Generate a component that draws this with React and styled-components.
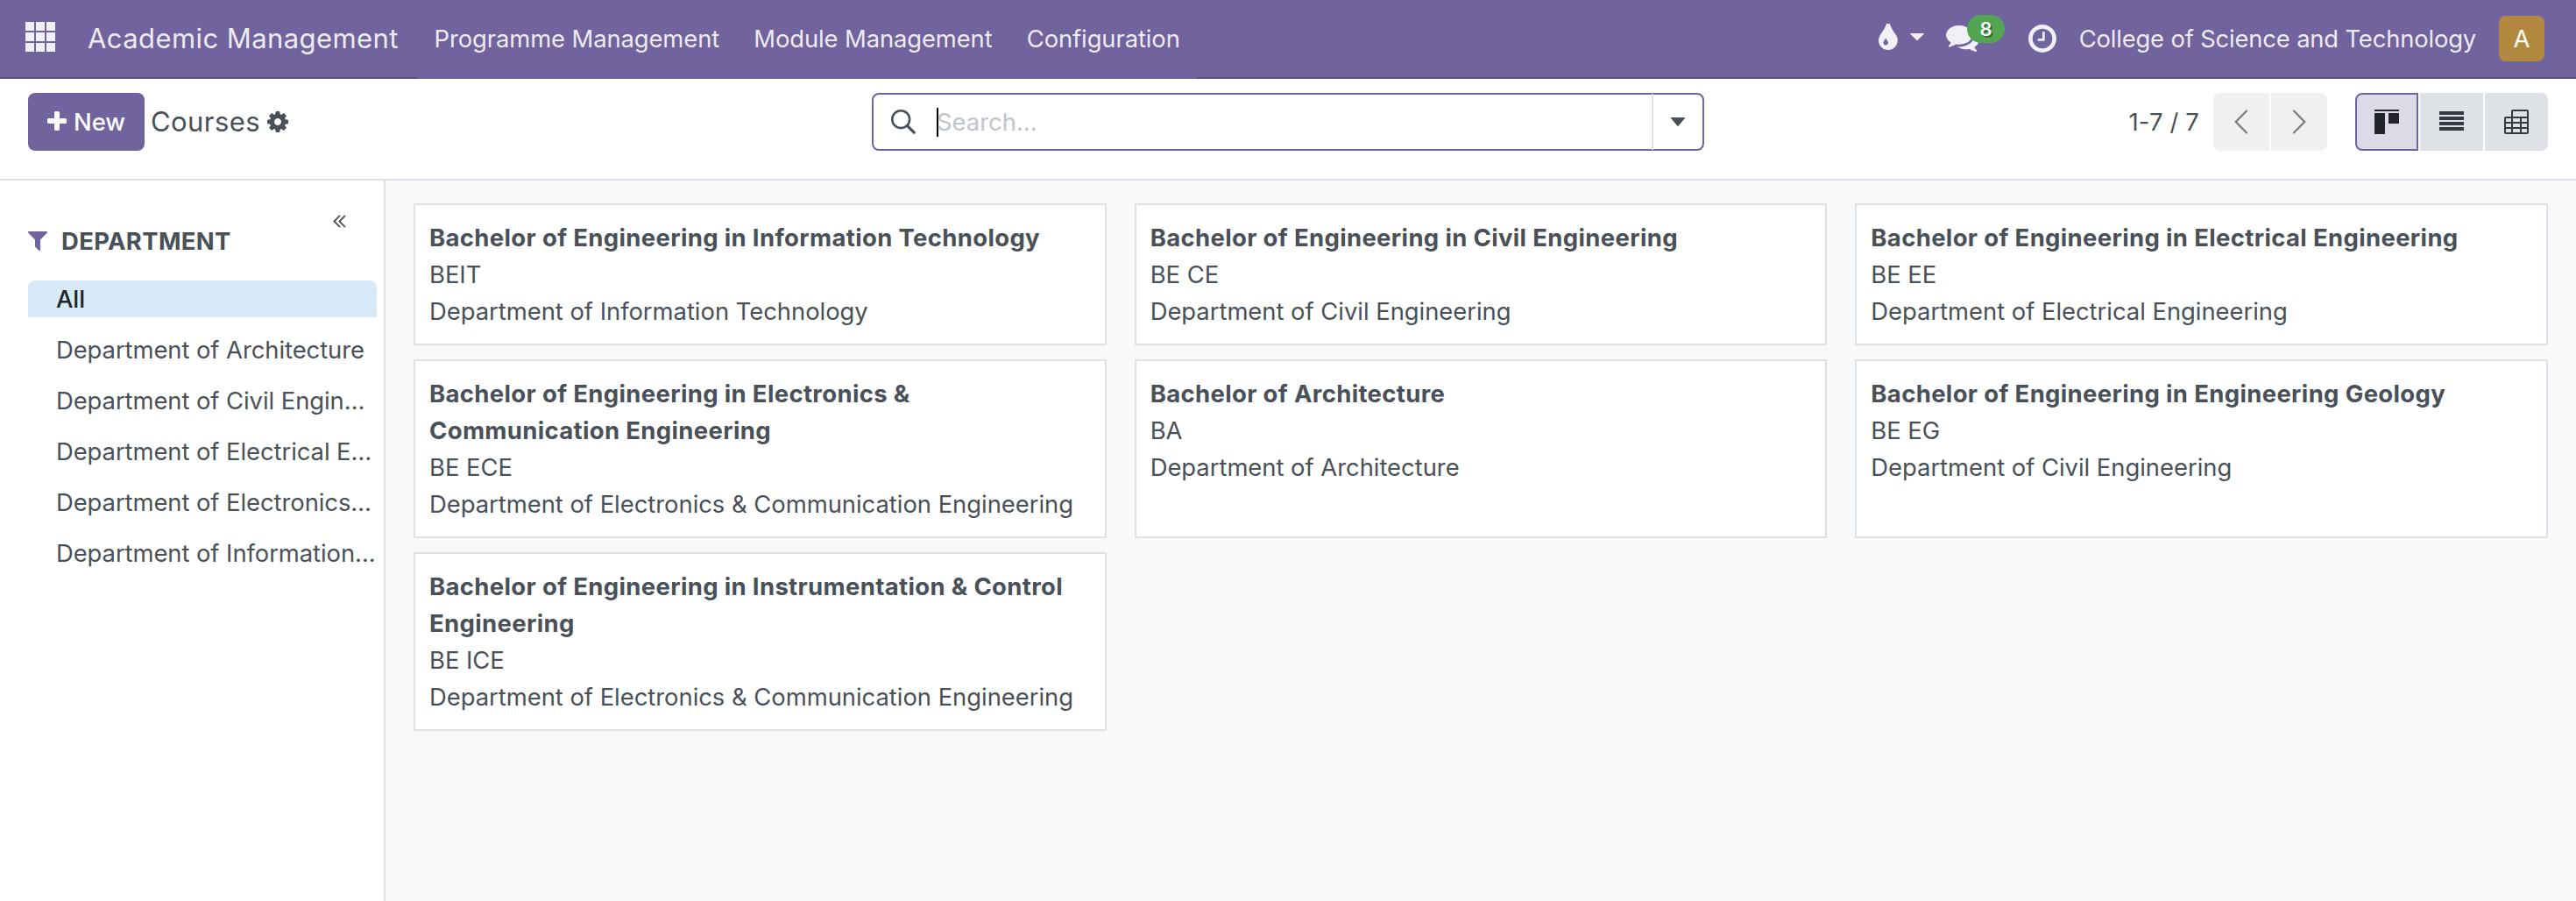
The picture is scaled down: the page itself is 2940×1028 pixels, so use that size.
import React from "react";
import styled, { createGlobalStyle } from "styled-components";

const BRAND = "#71639e";
const TEXT = "#495057";
const LINE = "#dee2e6";

const GlobalStyle = createGlobalStyle`
  * { box-sizing: border-box; }
  html, body { margin: 0; padding: 0; }
  body {
    font-family: Inter, "Liberation Sans", sans-serif;
    font-size: 27.4px;
    line-height: 42px;
    color: ${TEXT};
    background: #fff;
  }
`;

const Page = styled.div`
  display: flex;
  flex-direction: column;
  height: 1028px;
  overflow: hidden;
`;

/* ---------- Navbar ---------- */

const Navbar = styled.header`
  display: flex;
  align-items: center;
  flex: 0 0 90px;
  padding: 0 36px 0 29px;
  background: ${BRAND};
  box-shadow: inset 0 -2px 0 #5a4f7f;
  color: rgba(255, 255, 255, 0.9);
`;

const Brand = styled.a`
  width: 376px;
  margin: 0 0 2px 37px;
  font-size: 31px;
  letter-spacing: 0.42px;
  white-space: nowrap;
`;

const Menu = styled.nav`
  display: flex;
  align-items: center;
  height: 90px;
  padding-bottom: 2px;
  background: ${BRAND};
`;

const MenuItem = styled.a`
  padding: 0 19.6px;
  letter-spacing: -0.1px;
  white-space: nowrap;
`;

const Systray = styled.div`
  display: flex;
  align-items: center;
  height: 88px;
  margin: 0 0 2px auto;
`;

const Debug = styled.span`
  display: flex;
  align-items: center;
  gap: 14.5px;
  margin-right: 25px;
  padding-bottom: 4px;
`;

const Messages = styled.span`
  position: relative;
  display: flex;
  margin-right: 56px;
`;

const Badge = styled.span`
  position: absolute;
  left: 24px;
  top: -12px;
  width: 43px;
  height: 32px;
  border-radius: 16px;
  background: #52a652;
  color: #f4f3f7;
  font-size: 22px;
  font-weight: 600;
  line-height: 32px;
  text-align: center;
  text-shadow: 2px 2px 0 rgba(0, 0, 0, 0.35);
`;

const Company = styled.span`
  margin: 0 26px 0 25.5px;
  letter-spacing: -0.17px;
  white-space: nowrap;
`;

const Avatar = styled.span`
  width: 52px;
  height: 52px;
  border-radius: 8px;
  background: #b3893f;
  color: #fff;
  line-height: 52px;
  text-align: center;
`;

/* ---------- Control panel ---------- */

const ControlPanel = styled.section`
  display: grid;
  grid-template-columns: 963px 950px 1fr;
  flex: 0 0 116px;
  padding: 16px 32px 0;
  border-bottom: 2px solid ${LINE};
  background: #fff;
`;

const Crumbs = styled.div`
  display: flex;
  align-items: center;
  height: 66px;
`;

const NewButton = styled.button`
  display: flex;
  align-items: center;
  gap: 8px;
  width: 133px;
  height: 66px;
  padding: 0 0 0 22px;
  border: 0;
  border-radius: 8px;
  background: ${BRAND};
  color: #fff;
  font: 500 27.4px/42px Inter, sans-serif;

  svg { margin-bottom: 2px; }
`;

const Title = styled.h1`
  margin: 0 8px 0 7px;
  font-size: 31px;
  font-weight: 400;
  line-height: 42px;
  letter-spacing: 0.43px;
`;

const SearchBox = styled.div`
  display: flex;
  align-items: center;
  height: 66px;
  border: 2px solid ${BRAND};
  border-radius: 8px;
  background: #fff;
`;

const SearchIcon = styled.span`
  display: flex;
  width: 72px;
  padding-left: 20px;
`;

const SearchInput = styled.span`
  flex: 1;
  height: 33px;
  border-left: 2px solid #000;
  color: #c0c5cb;
  line-height: 33px;
  text-indent: -2px;
`;

const SearchToggle = styled.span`
  display: flex;
  align-items: center;
  justify-content: center;
  width: 58px;
  height: 64px;
  margin: -1px 0;
  padding-right: 1px;
  border-left: 2px solid ${LINE};
`;

const Tools = styled.div`
  display: flex;
  justify-content: flex-end;
  align-items: center;
  height: 66px;
`;

const PagerText = styled.span`
  margin-right: 16px;
  letter-spacing: 0.15px;
`;

const ButtonGroup = styled.div`
  display: flex;
  gap: 2px;
  height: 66px;
  margin-left: ${(p) => p.$offset || 0}px;
`;

const GroupButton = styled.button`
  display: flex;
  align-items: center;
  justify-content: center;
  width: ${(p) => p.$width}px;
  padding: 0;
  border: ${(p) => (p.$active ? `2px solid ${BRAND}` : "0")};
  background: ${(p) => (p.$active ? "#dddae7" : p.$muted ? "#eff0f2" : LINE)};

  &:first-child { border-radius: 8px 0 0 8px; }
  &:last-child { border-radius: 0 8px 8px 0; }
`;

/* ---------- Body ---------- */

const Body = styled.main`
  display: flex;
  flex: 1;
  min-height: 0;
`;

const Sidebar = styled.aside`
  flex: 0 0 440px;
  width: 440px;
  min-width: 0;
  padding: 39px 8px 0 32px;
  border-right: 2px solid ${LINE};
  background: #fff;
`;

const Collapse = styled.div`
  display: flex;
  justify-content: flex-end;
  height: 15px;
  padding-right: 35px;
`;

const SectionHeader = styled.div`
  display: flex;
  align-items: center;
  gap: 16px;
  height: 42px;
  margin: -6px 0 24px;
  font-weight: 700;
  letter-spacing: 0.38px;
`;

const DepartmentList = styled.ul`
  display: flex;
  flex-direction: column;
  gap: 16px;
  margin: 0;
  padding: 0;
  list-style: none;
`;

const Department = styled.li`
  overflow: hidden;
  height: 42px;
  padding-left: 32px;
  border-radius: 8px 8px 0 0;
  background: ${(p) => (p.$active ? "#d8e9f7" : "transparent")};
  color: ${(p) => (p.$active ? "#212529" : TEXT)};
  font-weight: ${(p) => (p.$active ? 500 : 400)};
  letter-spacing: -0.06px;
  text-overflow: ellipsis;
  white-space: nowrap;
`;

const Kanban = styled.section`
  display: grid;
  grid-template-columns: repeat(3, minmax(0, 1fr));
  align-content: start;
  gap: 16px 32px;
  flex: 1;
  min-width: 0;
  padding: 26px 32px;
  background: #f8f9fb;
`;

const Card = styled.article`
  padding: 16px;
  border: 2px solid ${LINE};
  background: #fff;
`;

const CardTitle = styled.strong`
  display: block;
  font-size: 27.5px;
  font-weight: 700;
  letter-spacing: 0.34px;
`;

const CardLine = styled.div`
  letter-spacing: -0.02px;
  white-space: nowrap;
`;

/* ---------- Icons ---------- */

const Glyph = ({ box, w, h, d, color = "currentColor" }) => (
  <svg width={w} height={h} viewBox={box} fill={color}>
    <path d={d} />
  </svg>
);

const AppsGrid = styled.svg`
  margin-bottom: 6px;
`;

const AppsIcon = () => (
  <AppsGrid width="34" height="34" viewBox="0 0 34 34" fill="currentColor">
    {[0, 12, 24].map((y) =>
      [0, 12, 24].map((x) => <rect key={`${x}-${y}`} x={x} y={y} width="10" height="10" />)
    )}
  </AppsGrid>
);

const TintIcon = () => (
  <Glyph
    box="384 128 1024 1408"
    w={21.8}
    h={30}
    d="M896 1152q0-36-20-69-1-1-15.5-22.5t-25.5-38-25-44-21-50.5q-4-16-21-16t-21 16q-7 23-21 50.5t-25 44-25.5 38-15.5 22.5q-20 33-20 69 0 53 37.5 90.5t90.5 37.5 90.5-37.5 37.5-90.5zm512-128q0 212-150 362t-362 150-362-150-150-362q0-145 81-275 6-9 62.5-90.5t101-151 99.5-178 83-201.5q9-30 34-47t51-17 51.5 17 33.5 47q28 93 83 201.5t99.5 178 101 151 62.5 90.5q81 127 81 275z"
  />
);

const CommentsIcon = () => (
  <Glyph
    box="0 256 1792 1408"
    w={38}
    h={30}
    d="M1408 768q0 139-94 257t-256.5 186.5-353.5 68.5q-86 0-176-16-124 88-278 128-36 9-86 16h-3q-11 0-20.5-8t-11.5-21q-1-3-1-6.5t.5-6.5 2-6l2.5-5 3.5-5.5 4-5 4.5-5 4-4.5q5-6 23-25t26-29.5 22.5-29 25-38.5 20.5-44q-124-72-195-177t-71-224q0-139 94-257t256.5-186.5 353.5-68.5 353.5 68.5 256.5 186.5 94 257zm384 256q0 120-71 224.5t-195 176.5q10 24 20.5 44t25 38.5 22.5 29 26 29.5 23 25q1 1 4 4.5t4.5 5 4 5 3.5 5.5l2.5 5 2 6 .5 6.5-1 6.5q-3 14-13 22t-22 7q-50-7-86-16-154-40-278-128-90 16-176 16-271 0-472-132 58 4 88 4 161 0 309-45t264-129q125-92 192-212t67-254q0-77-23-152 129 71 204 178t75 230z"
  />
);

const ClockIcon = () => (
  <Glyph
    box="128 128 1536 1536"
    w={32}
    h={32}
    d="M1024 544v448q0 14-9 23t-23 9h-320q-14 0-23-9t-9-23v-64q0-14 9-23t23-9h224v-352q0-14 9-23t23-9h64q14 0 23 9t9 23zm416 352q0-148-73-273t-198-198-273-73-273 73-198 198-73 273 73 273 198 198 273 73 273-73 198-198 73-273zm224 0q0 209-103 385.5t-279.5 279.5-385.5 103-385.5-103-279.5-279.5-103-385.5 103-385.5 279.5-279.5 385.5-103 385.5 103 279.5 279.5 103 385.5z"
  />
);

const PlusIcon = () => (
  <Glyph
    box="192 128 1408 1408"
    w={22}
    h={22}
    d="M1600 736v192q0 40-28 68t-68 28h-416v416q0 40-28 68t-68 28h-192q-40 0-68-28t-28-68v-416h-416q-40 0-68-28t-28-68v-192q0-40 28-68t68-28h416v-416q0-40 28-68t68-28h192q40 0 68 28t28 68v416h416q40 0 68 28t28 68z"
  />
);

const CogIcon = () => (
  <Glyph
    box="128 128 1536 1536"
    w={24}
    h={24}
    d="M1152 896q0-106-75-181t-181-75-181 75-75 181 75 181 181 75 181-75 75-181zm512-109v222q0 12-8 23t-20 13l-185 28q-19 54-39 91 35 50 107 138 10 12 10 25t-9 23q-27 37-99 108t-94 71q-12 0-26-9l-138-108q-44 23-91 38-16 136-29 186-7 28-36 28h-222q-14 0-24.5-8.5t-11.5-21.5l-28-184q-49-16-90-37l-141 107q-10 9-25 9-14 0-25-11-126-114-165-168-7-10-7-23 0-12 8-23 15-21 51-66.5t54-70.5q-27-50-41-99l-183-27q-13-2-21-12.5t-8-23.5v-222q0-12 8-23t19-13l186-28q14-46 39-92-40-57-107-138-10-12-10-24 0-10 9-23 26-36 98.5-107.5t94.5-71.5q13 0 26 10l138 107q44-23 91-38 16-136 29-186 7-28 36-28h222q14 0 24.5 8.5t11.5 21.5l28 184q49 16 90 37l142-107q9-9 24-9 13 0 25 10 129 119 165 170 7 8 7 22 0 12-8 23-15 21-51 66.5t-54 70.5q26 50 41 98l183 28q13 2 21 12.5t8 23.5z"
  />
);

const FilterIcon = () => (
  <Glyph
    box="192 256 1408 1408"
    w={22}
    h={22}
    color={BRAND}
    d="M1595 295q17 41-14 70l-493 493v742q0 42-39 59-13 5-25 5-27 0-45-19l-256-256q-19-19-19-45v-486l-493-493q-31-29-14-70 17-39 59-39h1280q42 0 59 39z"
  />
);

const CaretIcon = ({ w, h }) => (
  <svg width={w} height={h} viewBox="0 0 16 9" preserveAspectRatio="none" fill="currentColor">
    <path d="M0.6 0h14.8q.9.4.3 1.2L8.7 8.6q-.7.6-1.4 0L.3 1.2Q-.3.4.6 0z" />
  </svg>
);

const SearchGlyph = () => (
  <svg width="28" height="28" viewBox="0 0 28 28" fill="none" stroke={TEXT}>
    <circle cx="11.2" cy="11.2" r="9.9" strokeWidth="2.6" />
    <path d="M18.4 18.4l7.8 7.8" strokeWidth="3.2" strokeLinecap="round" />
  </svg>
);

const ChevronIcon = ({ points }) => (
  <svg width="16" height="28" viewBox="0 0 16 28" fill="none" stroke="#7e8082" strokeWidth="2.4" strokeLinecap="round">
    <polyline points={points} />
  </svg>
);

const DoubleAngleIcon = () => (
  <svg width="15" height="15" viewBox="0 0 15 15" fill="none" stroke={TEXT} strokeWidth="1.8">
    <path d="M8 .9L1.4 7.5 8 14.1M14 .9L7.4 7.5 14 14.1" />
  </svg>
);

const KanbanIcon = () => (
  <svg width="28" height="28" viewBox="0 0 28 28" fill="#212529">
    <rect width="28" height="2" />
    <rect y="4" width="12" height="24" />
    <rect x="16" y="4" width="12" height="12" />
  </svg>
);

const ListIcon = () => (
  <svg width="28" height="28" viewBox="0 0 28 28" fill="#343a40">
    {[2, 8, 14, 20].map((y) => (
      <rect key={y} y={y} width="28" height="4" />
    ))}
  </svg>
);

const PivotIcon = () => (
  <svg width="28" height="28" viewBox="0 0 28 28" fill="none" stroke="#343a40" strokeWidth="2">
    <path d="M9 27V2q0-1 1-1h16q1 0 1 1v24q0 1-1 1H2q-1 0-1-1V10q0-1 1-1h25M1 15h26M1 21h26M19 9v18" />
  </svg>
);

/* ---------- Data ---------- */

const MENU = ["Programme Management", "Module Management", "Configuration"];

const DEPARTMENTS = [
  "All",
  "Department of Architecture",
  "Department of Civil Engineering",
  "Department of Electrical Engineering",
  "Department of Electronics & Communication Engineering",
  "Department of Information Technology",
];

const COURSES = [
  ["Bachelor of Engineering in Information Technology", "BEIT", "Department of Information Technology"],
  ["Bachelor of Engineering in Civil Engineering", "BE CE", "Department of Civil Engineering"],
  ["Bachelor of Engineering in Electrical Engineering", "BE EE", "Department of Electrical Engineering"],
  ["Bachelor of Engineering in Electronics & Communication Engineering", "BE ECE", "Department of Electronics & Communication Engineering"],
  ["Bachelor of Architecture", "BA", "Department of Architecture"],
  ["Bachelor of Engineering in Engineering Geology", "BE EG", "Department of Civil Engineering"],
  ["Bachelor of Engineering in Instrumentation & Control Engineering", "BE ICE", "Department of Electronics & Communication Engineering"],
];

export default function App() {
  return (
    <Page>
      <GlobalStyle />
      <Navbar>
        <AppsIcon />
        <Brand>Academic Management</Brand>
        <Menu>
          {MENU.map((label) => (
            <MenuItem key={label}>{label}</MenuItem>
          ))}
        </Menu>
        <Systray>
          <Debug>
            <TintIcon />
            <CaretIcon w={16} h={8} />
          </Debug>
          <Messages>
            <CommentsIcon />
            <Badge>8</Badge>
          </Messages>
          <ClockIcon />
          <Company>College of Science and Technology</Company>
          <Avatar>A</Avatar>
        </Systray>
      </Navbar>

      <ControlPanel>
        <Crumbs>
          <NewButton>
            <PlusIcon />
            New
          </NewButton>
          <Title>Courses</Title>
          <CogIcon />
        </Crumbs>
        <SearchBox>
          <SearchIcon>
            <SearchGlyph />
          </SearchIcon>
          <SearchInput>Search...</SearchInput>
          <SearchToggle>
            <CaretIcon w={16} h={10} />
          </SearchToggle>
        </SearchBox>
        <Tools>
          <PagerText>1-7 / 7</PagerText>
          <ButtonGroup>
            <GroupButton $width={64} $muted>
              <ChevronIcon points="14,1.5 1.8,14 14,26.5" />
            </GroupButton>
            <GroupButton $width={64} $muted>
              <ChevronIcon points="2,1.5 14.2,14 2,26.5" />
            </GroupButton>
          </ButtonGroup>
          <ButtonGroup $offset={32}>
            <GroupButton $width={72} $active>
              <KanbanIcon />
            </GroupButton>
            <GroupButton $width={72}>
              <ListIcon />
            </GroupButton>
            <GroupButton $width={72}>
              <PivotIcon />
            </GroupButton>
          </ButtonGroup>
        </Tools>
      </ControlPanel>

      <Body>
        <Sidebar>
          <Collapse>
            <DoubleAngleIcon />
          </Collapse>
          <SectionHeader>
            <FilterIcon />
            DEPARTMENT
          </SectionHeader>
          <DepartmentList>
            {DEPARTMENTS.map((name, i) => (
              <Department key={name} $active={i === 0}>
                {name}
              </Department>
            ))}
          </DepartmentList>
        </Sidebar>
        <Kanban>
          {COURSES.map(([title, code, department]) => (
            <Card key={title}>
              <CardTitle>{title}</CardTitle>
              <CardLine>{code}</CardLine>
              <CardLine>{department}</CardLine>
            </Card>
          ))}
        </Kanban>
      </Body>
    </Page>
  );
}
